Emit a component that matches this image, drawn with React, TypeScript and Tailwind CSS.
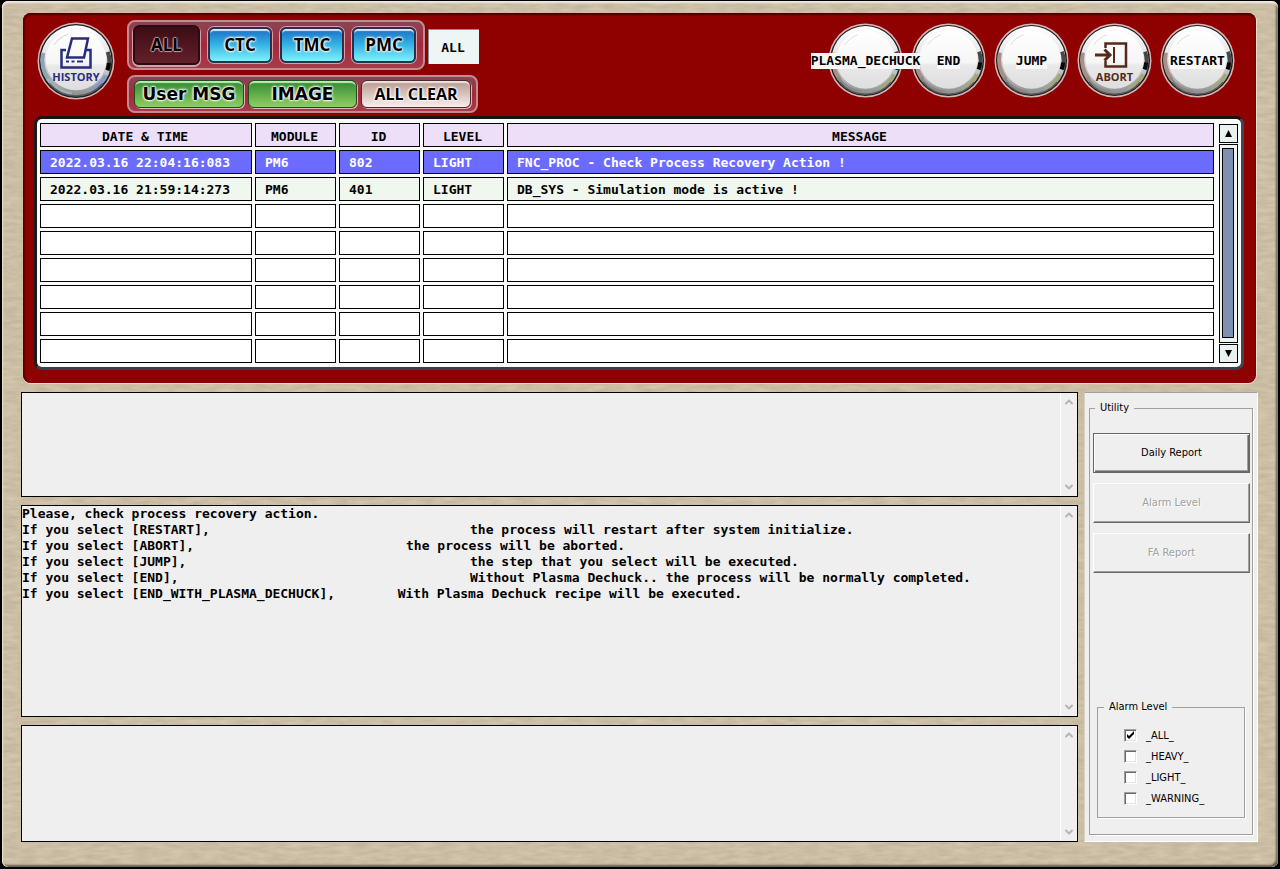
import { useState, type ReactNode } from "react";
import { ChevronDown, ChevronUp } from "lucide-react";

const COLUMNS = ["DATE & TIME", "MODULE", "ID", "LEVEL", "MESSAGE"];

const ALARMS = [
  ["2022.03.16 22:04:16:083", "PM6", "802", "LIGHT", "FNC_PROC - Check Process Recovery Action !"],
  ["2022.03.16 21:59:14:273", "PM6", "401", "LIGHT", "DB_SYS - Simulation mode is active !"],
];

const ROW_COUNT = 8;

const GUIDE = [
  "Please, check process recovery action.",
  "If you select [RESTART],\t\t\t\t\tthe process will restart after system initialize.",
  "If you select [ABORT],\t\t\t\tthe process will be aborted.",
  "If you select [JUMP],\t\t\t\t\tthe step that you select will be executed.",
  "If you select [END],\t\t\t\t\tWithout Plasma Dechuck.. the process will be normally completed.",
  "If you select [END_WITH_PLASMA_DECHUCK],        With Plasma Dechuck recipe will be executed.",
].join("\n");

const LEVELS = ["_ALL_", "_HEAVY_", "_LIGHT_", "_WARNING_"];

const MONO = "font-['DejaVu_Sans_Mono',monospace] text-[13px] font-bold leading-4";
const HALO = "[text-shadow:0_0_2px_#fff,0_0_2px_#fff,0_0_3px_#fff,0_0_3px_#fff]";

function PaperTexture() {
  return (
    <svg className="absolute inset-0 h-full w-full" aria-hidden="true">
      <filter id="paper" x="0" y="0" width="100%" height="100%" colorInterpolationFilters="sRGB">
        <feTurbulence type="fractalNoise" baseFrequency="0.06 0.26" numOctaves="3" seed="4" />
        <feColorMatrix values="0.11 0 0 0 0.74  0.11 0 0 0 0.69  0.11 0 0 0 0.59  0 0 0 0 1" />
      </filter>
      <rect width="100%" height="100%" filter="url(#paper)" />
    </svg>
  );
}

function ChromeRing({ id, blue = false }: { id: string; blue?: boolean }) {
  return (
    <svg viewBox="0 0 76 76" className="absolute inset-0 h-full w-full" aria-hidden="true">
      <defs>
        <linearGradient id={`${id}-rim`} x1="0" y1="0" x2="0" y2="1">
          <stop offset="0" stopColor="#ffffff" />
          <stop offset="0.45" stopColor="#e4e4e6" />
          <stop offset="0.75" stopColor="#b4b6b8" />
          <stop offset="1" stopColor="#8c8e90" />
        </linearGradient>
        <linearGradient id={`${id}-face`} x1="0" y1="0" x2="0" y2="1">
          <stop offset="0" stopColor="#ffffff" />
          <stop offset="0.55" stopColor="#f6f6f7" />
          <stop offset="0.6" stopColor="#e9e9ea" />
          <stop offset="1" stopColor="#dededf" />
        </linearGradient>
      </defs>
      <circle cx="38" cy="38" r="37.5" fill="#d9b5b5" />
      <circle cx="38" cy="38" r="36" fill="#1c1c1e" />
      <circle cx="38" cy="37.6" r="34.5" fill={`url(#${id}-rim)`} />
      <path d="M6 30 A33 33 0 0 0 12 57" fill="none" stroke={blue ? "#8fa3b0" : "#a98f86"} strokeWidth="4" />
      <path d="M10 55 A33 33 0 0 0 34 70" fill="none" stroke={blue ? "#9fb0ba" : "#8d8a86"} strokeWidth="3" />
      <path d="M69 29 A32 32 0 0 1 69.500 47" fill="none" stroke="#4a4648" strokeWidth="4" />
      <path d="M70 40 A32 32 0 0 1 68.500 47" fill="none" stroke="#050505" strokeWidth="4" />
      <path d="M67 52 A32 32 0 0 1 52 67" fill="none" stroke={blue ? "#8c97c4" : "#a3a77c"} strokeWidth="4" />
      <path d="M12 60 A34 34 0 0 0 64 60" fill="none" stroke="#56585a" strokeWidth="1.5" />
      <circle cx="38" cy="37" r="29.500" fill={`url(#${id}-face)`} />
      <path d="M17 22 A27 27 0 0 1 30 12" fill="none" stroke="#e2d8d4" strokeWidth="1" />
    </svg>
  );
}

function RoundButton({ id, children, large = false }: { id: string; children: ReactNode; large?: boolean }) {
  return (
    <button
      type="button"
      className={`relative flex shrink-0 items-center justify-center rounded-full ${large ? "size-[78px]" : "size-[75px]"}`}
    >
      <ChromeRing id={id} blue={large} />
      {children}
    </button>
  );
}

function MonoLabel({ children }: { children: ReactNode }) {
  return <span className={`relative z-10 whitespace-nowrap bg-[#f8f8f8] text-black ${MONO}`}>{children}</span>;
}

function SourceButton({ label }: { label: string }) {
  return (
    <button
      type="button"
      className="h-9 w-16 rounded-md border-2 border-[#2b2f4c] bg-linear-to-b from-[#1f6fc4] via-[#35b4e4] to-[#7ff2fb] shadow-[0_0_0_1px_#d9a0aa,inset_0_3px_1px_-1px_#d4eaff] outline-none"
    >
      <span className={`font-['Open_Sans',sans-serif] text-[17px] font-bold leading-5 text-black ${HALO}`}>{label}</span>
    </button>
  );
}

function MessagePane({ label, text = "" }: { label: string; text?: string }) {
  return (
    <div className="flex min-h-0 border border-black bg-[#efefef]">
      <textarea
        readOnly
        aria-label={label}
        defaultValue={text}
        className={`min-w-0 flex-1 resize-none overflow-hidden whitespace-pre text-black outline-none [tab-size:64px] ${MONO}`}
      />
      <div className="flex w-[17px] shrink-0 flex-col items-center justify-between border-l border-white py-[3px] text-[#b5b5b5]">
        <ChevronUp size={12} strokeWidth={4} aria-hidden="true" />
        <ChevronDown size={12} strokeWidth={4} aria-hidden="true" />
      </div>
    </div>
  );
}

function UtilityButton({ label, disabled = false }: { label: string; disabled?: boolean }) {
  return (
    <button
      type="button"
      disabled={disabled}
      className={
        disabled
          ? "h-10 border border-t-white border-l-white border-r-[#696969] border-b-[#696969] text-[#a0a0a0] shadow-[inset_-1px_-1px_0_#a0a0a0] [text-shadow:1px_1px_0_#fff]"
          : "h-10 border border-[#646464] text-black shadow-[inset_1px_1px_0_#fff,inset_-1px_-1px_0_#696969,inset_-2px_-2px_0_#a0a0a0]"
      }
    >
      {label}
    </button>
  );
}

function LevelCheckbox({ label, initial }: { label: string; initial: boolean }) {
  const [checked, setChecked] = useState(initial);
  return (
    <label className="flex h-[21px] items-center gap-[9px]">
      <span className="relative flex size-[13px]">
        <input
          type="checkbox"
          checked={checked}
          onChange={(e) => setChecked(e.target.checked)}
          className="size-[13px] appearance-none border border-t-[#a0a0a0] border-l-[#a0a0a0] border-r-white border-b-white bg-white shadow-[inset_1px_1px_0_#696969,inset_-1px_-1px_0_#e3e3e3]"
        />
        {checked && (
          <svg viewBox="0 0 13 13" className="pointer-events-none absolute inset-0" aria-hidden="true">
            <path d="M3 5v3l2 2 5-5V2L5 7z" fill="#000" />
          </svg>
        )}
      </span>
      {label}
    </label>
  );
}

export default function App() {
  return (
    <div className="flex min-h-screen flex-col bg-black px-0.5 pt-px pb-0.5">
      <div className="relative flex flex-1 flex-col overflow-hidden rounded-md bg-[#cabda3]">
        <PaperTexture />
        <div className="pointer-events-none absolute inset-0 rounded-md shadow-[inset_0_2px_2px_#f1ebe4,inset_1px_0_1px_#e6dccb,inset_-2px_-2px_2px_#5f574b]" />

        <main className="relative flex flex-1 flex-col gap-[9px] pt-3 pr-5 pb-[25px] pl-[19px]">
          <section className="mr-0.5 ml-0.5 rounded-lg bg-[#8f0000] px-3 pt-[7px] pb-[13px] shadow-[inset_0_2px_2px_#4a0000,inset_2px_0_2px_#600000,0_1px_0_#f3dcd2,1px_0_0_#eadfd2]">
            <div className="flex justify-between pb-[3px] pl-0.5 pr-[9px]">
              <div className="flex">
                <div className="pt-0.5 pr-3">
                  <RoundButton id="history" large>
                    <span className="relative flex flex-col items-center text-[#272d7d]">
                      <svg width="34" height="32" viewBox="0 0 34 32" fill="none" stroke="currentColor" strokeWidth="2.500" aria-hidden="true">
                        <path d="M7 13H2.500V30.500H31.500V13H27" />
                        <path d="M8 20.500L13 1.500H29L25 20.500Z" />
                        <path d="M7 24.500h3M12.500 24.500h3M18 24.500h6" strokeWidth="2" />
                      </svg>
                      <span className="font-['Open_Sans',sans-serif] text-[11px] font-bold leading-4">HISTORY</span>
                    </span>
                  </RoundButton>
                </div>

                <div className="flex flex-col items-start gap-[5px]">
                  <div className="flex gap-[3px]">
                    <div className="flex h-[50px] items-center gap-2 rounded-lg border-2 border-[#c08c94] bg-linear-to-b from-[#8c4253] via-[#a4283a] to-[#a83a4a] px-1 pr-[7px]">
                      <button
                        type="button"
                        className="h-10 w-[67px] rounded-md border-2 border-[#2a0b10] bg-linear-to-b from-[#3d0c14] to-[#64202b] shadow-[0_1px_0_1px_#d9a0aa]"
                      >
                        <span className="font-['Open_Sans',sans-serif] text-[17px] font-bold leading-5 text-black [text-shadow:1px_0_1px_#c99aa0,-1px_0_1px_#c99aa0,0_1px_1px_#c99aa0,0_-1px_1px_#c99aa0]">
                          ALL
                        </span>
                      </button>
                      <SourceButton label="CTC" />
                      <SourceButton label="TMC" />
                      <SourceButton label="PMC" />
                    </div>
                    <input
                      readOnly
                      aria-label="Selected source"
                      defaultValue="ALL"
                      className={`mt-[9px] h-[35px] w-[51px] border-t border-l border-[#8a8f92] bg-[#eef5f5] pr-0.5 text-center text-black outline-none ${MONO}`}
                    />
                  </div>

                  <div className="flex h-[38px] items-center gap-1 rounded-lg border-2 border-[#c08c94] bg-linear-to-b from-[#8c4253] via-[#a4283a] to-[#a83a4a] pr-[5px] pl-[5px]">
                    <button
                      type="button"
                      className="h-7 w-[110px] rounded-md border border-[#1b4f1c] bg-linear-to-b from-[#2f8a32] to-[#8fcf62] shadow-[1px_1px_0_#e3b4b8,inset_0_3px_1px_-1px_#c5e8b8]"
                    >
                      <span className={`font-['DejaVu_Sans',sans-serif] text-[17px] font-bold leading-5 text-black ${HALO}`}>User MSG</span>
                    </button>
                    <button
                      type="button"
                      className="h-7 w-[109px] rounded-md border border-[#1b4f1c] bg-linear-to-b from-[#2f8a32] to-[#8fcf62] shadow-[1px_1px_0_#e3b4b8,inset_0_3px_1px_-1px_#c5e8b8]"
                    >
                      <span className={`font-['DejaVu_Sans',sans-serif] text-[17px] font-bold leading-5 text-black ${HALO}`}>IMAGE</span>
                    </button>
                    <button
                      type="button"
                      className="h-7 w-[110px] rounded-md border border-[#4a2c2c] bg-linear-to-b from-[#b79a90] to-[#f8eeee] shadow-[1px_1px_0_#e3b4b8,inset_0_3px_1px_-1px_#efe2dc]"
                    >
                      <span className={`font-['Open_Sans',sans-serif] text-[16px] font-bold leading-5 text-black ${HALO}`}>ALL CLEAR</span>
                    </button>
                  </div>
                </div>
              </div>

              <div className="flex gap-2 pt-[3px]">
                <RoundButton id="dechuck">
                  <MonoLabel>PLASMA_DECHUCK</MonoLabel>
                </RoundButton>
                <RoundButton id="end">
                  <MonoLabel>END</MonoLabel>
                </RoundButton>
                <RoundButton id="jump">
                  <MonoLabel>JUMP</MonoLabel>
                </RoundButton>
                <RoundButton id="abort">
                  <span className="relative flex flex-col items-center pt-1 text-[#552a18]">
                    <svg className="mr-2" width="34" height="28" viewBox="0 0 34 28" fill="none" stroke="currentColor" strokeWidth="2.500" aria-hidden="true">
                      <path d="M11.500 7V2.500H32V25.500H11.500V20" />
                      <path d="M20 6V22" strokeWidth="2" />
                      <path d="M1 14H15M10.500 8.500L16 14L10.500 19.500" strokeWidth="3" />
                    </svg>
                    <span className="font-['Open_Sans',sans-serif] text-[11px] font-bold leading-4">ABORT</span>
                  </span>
                </RoundButton>
                <RoundButton id="restart">
                  <MonoLabel>RESTART</MonoLabel>
                </RoundButton>
              </div>
            </div>

            <div className="-ml-px flex rounded-lg border-[3px] border-t-[#151515] border-r-[#3a4a55] border-b-[#3a4048] border-l-[#1c1c1e] bg-[#fafcfa] pt-px pb-px">
              <table className={`min-w-0 flex-1 table-fixed border-separate border-spacing-[3px] text-black ${MONO}`}>
                <colgroup>
                  <col className="w-[212px]" />
                  <col className="w-[81px]" />
                  <col className="w-[81px]" />
                  <col className="w-[81px]" />
                  <col />
                </colgroup>
                <thead>
                  <tr className="h-6 bg-[#ecdff7]">
                    {COLUMNS.map((c) => (
                      <th key={c} className="border border-black p-0 pt-[3px] pr-0.5 font-bold">
                        {c}
                      </th>
                    ))}
                  </tr>
                </thead>
                <tbody>
                  {Array.from({ length: ROW_COUNT }, (_, r) => (
                    <tr
                      key={r}
                      className={`h-6 ${r === 0 ? "bg-[#6b6bff] text-white" : r === 1 ? "bg-[#f0f7ef]" : "bg-white"}`}
                    >
                      {COLUMNS.map((c, i) => (
                        <td key={c} className="truncate border border-black p-0 pt-px pl-[9px]">
                          {ALARMS[r]?.[i]}
                        </td>
                      ))}
                    </tr>
                  ))}
                </tbody>
              </table>
              <div className="mt-1 mr-[3px] mb-[3px] ml-0.5 flex w-[19px] flex-col gap-px">
                <button type="button" aria-label="Scroll up" className="flex h-[19px] items-center justify-center border border-black bg-[#eaf1f1]">
                  <svg width="7" height="7" viewBox="0 0 7 7" aria-hidden="true"><path d="M3.500 0L7 7H0z" /></svg>
                </button>
                <div className="flex flex-1 border border-black bg-[#eef5ef] pt-[3px] pr-[3px] pb-1 pl-0.5">
                  <div className="flex-1 border border-black bg-[#7f90b0]" />
                </div>
                <button type="button" aria-label="Scroll down" className="flex h-[19px] items-center justify-center border border-black bg-[#eaf1f1]">
                  <svg width="7" height="7" viewBox="0 0 7 7" aria-hidden="true"><path d="M3.500 7L0 0h7z" /></svg>
                </button>
              </div>
            </div>
          </section>

          <div className="flex flex-1 gap-1.5">
            <div className="grid min-w-0 flex-1 grid-rows-[105fr_212fr_117fr] gap-2">
              <MessagePane label="Alarm description" />
              <MessagePane label="Recovery guide" text={GUIDE} />
              <MessagePane label="Notes" />
            </div>

            <aside className="flex w-[174px] shrink-0 flex-col border border-t-[#a0a0a0] border-r-white border-b-white border-l-[#d9d2c4] bg-[#efefef] px-1 pt-[7px] pb-1.5 font-['DejaVu_Sans_Condensed','Noto_Sans',sans-serif] text-[11px] leading-4 text-black">
              <fieldset className="flex flex-1 flex-col border border-[#a0a0a0] shadow-[1px_1px_0_#fff]">
                <legend className="ml-[5px] px-[5px]">Utility</legend>
                <div className="flex flex-1 flex-col pt-[17px] pr-0.5 pb-4 pl-[3px]">
                  <div className="flex flex-col gap-2.5">
                    <UtilityButton label="Daily Report" />
                    <UtilityButton label="Alarm Level" disabled />
                    <UtilityButton label="FA Report" disabled />
                  </div>
                  <fieldset className="mt-auto mr-[5px] ml-1 border border-[#a0a0a0] shadow-[1px_1px_0_#fff]">
                    <legend className="ml-[6px] px-[5px]">Alarm Level</legend>
                    <div className="flex flex-col pt-2.5 pb-2 pl-[26px]">
                      {LEVELS.map((l, i) => (
                        <LevelCheckbox key={l} label={l} initial={i === 0} />
                      ))}
                    </div>
                  </fieldset>
                </div>
              </fieldset>
            </aside>
          </div>
        </main>
      </div>
    </div>
  );
}
